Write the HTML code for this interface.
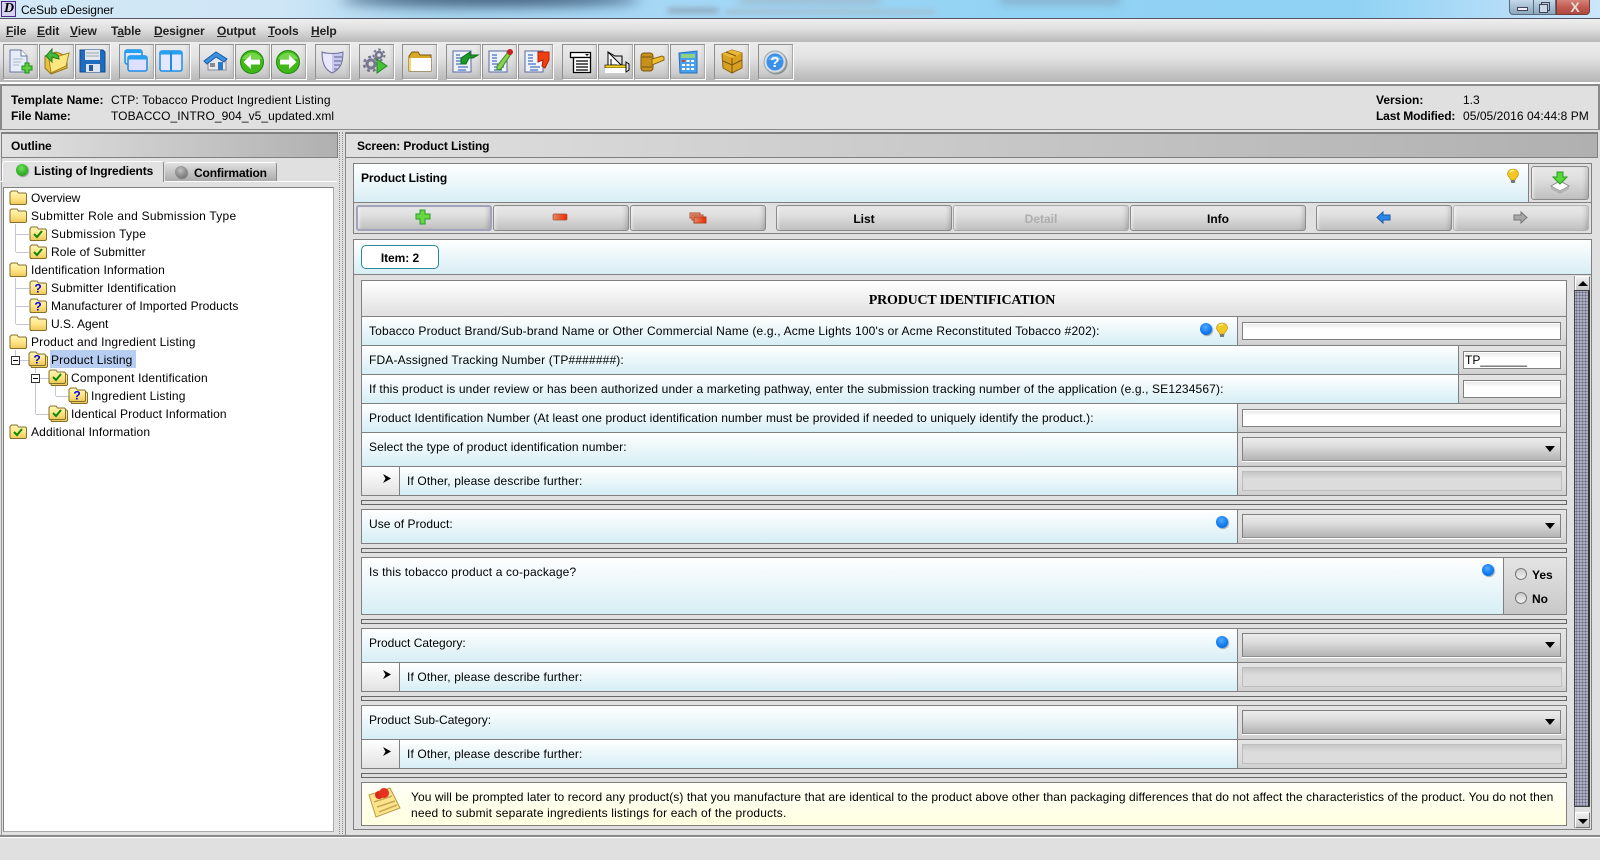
<!DOCTYPE html>
<html><head><meta charset="utf-8"><title>CeSub eDesigner</title>
<style>
html,body{margin:0;padding:0;width:1600px;height:860px;overflow:hidden;background:#e0e0e0}
body{position:relative;font:12px "Liberation Sans",Arial,sans-serif;color:#000}
div,span.a,svg.a{position:absolute;box-sizing:border-box}
.t{position:absolute;white-space:nowrap;line-height:16px;height:16px}
.b{font-weight:bold}
.m{font-weight:bold;color:#222;letter-spacing:-.1px;top:23px}
u{text-decoration:underline}
.tb{width:35px;height:35px;top:44px;background:linear-gradient(#ebebeb,#e2e2e2 40%,#c6c6c6);border:1px solid #8f8f8f;border-right-color:#aaa;border-bottom-color:#aaa;box-shadow:1px 1px 0 #fff,inset -2px -2px 3px rgba(0,0,0,.06)}
.tb svg{position:absolute;left:-1px;top:-1px;width:36px;height:36px}
.btn{top:205px;height:26px;border:1px solid #8a8a8a;border-radius:3px;background:linear-gradient(#e8e8e8,#e0e0e0 35%,#c0c0c0);box-shadow:inset -4px 0 4px -2px rgba(0,0,0,.16),inset 3px 0 3px -2px rgba(255,255,255,.7)}
.lab{background:linear-gradient(#fff,#d6eef5);border:1px solid #808080}
.rc{background:linear-gradient(#e4e4e4,#dcdcdc 70%,#cfcfcf);border:1px solid #808080;border-left:0}
.in{background:linear-gradient(#e6e6e6,#fff 6px);border:1px solid #808080;box-shadow:inset 1px 1px 0 #fff}
.sel{background:linear-gradient(#ececec,#dedede 35%,#b4b4b4);border:1px solid #808080;border-bottom-color:#909090;box-shadow:0 1px 0 #fff;left:1242px;width:319px;height:24px}
.sel:after{content:"";position:absolute;right:5px;top:8px;border:5px solid transparent;border-top:6px solid #000;border-bottom:0}
.dis{left:1242px;width:320px;height:20px;border:1px solid #bdbdbd;background:linear-gradient(#c6c6c6,#dcdcdc 7px)}
.sep{left:361px;width:1206px;height:5px;border:1px solid #666;background:#dedede}
.dot{width:12px;height:12px;border-radius:50%;background:radial-gradient(circle at 45% 35%,#55aaff,#0a78f0 60%,#0a58c0);box-shadow:1px 1px 1px rgba(0,0,0,.35)}
.arr{left:361px;width:39px;height:30px;border:1px solid #808080;background:linear-gradient(#fff,#e2e2e2)}
.tl{background:#c4c4dc}
</style></head><body>
<svg width="0" height="0" style="position:absolute">
<defs><linearGradient id="fy" x1="0" y1="0" x2="0" y2="1"><stop offset="0" stop-color="#fff6b8"/><stop offset=".5" stop-color="#ffe68a"/><stop offset="1" stop-color="#eec858"/></linearGradient></defs>
<symbol id="fo" viewBox="0 0 18 15"><path d="M1 4V2.500L2.500 1H8L9.500 3H16.500L17.500 4V13.500L16.500 14.500H1.500L1 13.500Z" fill="url(#fy)" stroke="#85702a"/></symbol>
<symbol id="ck" viewBox="0 0 18 15"><use href="#fo"/><path d="M5 8L8 11L13 5" fill="none" stroke="#0a8a0a" stroke-width="2"/></symbol>
<symbol id="qu" viewBox="0 0 18 15"><use href="#fo"/><text x="9" y="12.500" font-family="Liberation Sans" font-weight="bold" font-size="12" fill="#0000e0" text-anchor="middle">?</text></symbol>
<symbol id="bulb" viewBox="0 0 14 16"><path d="M7 1C3.500 1 1.500 3.500 1.500 6C1.500 8.500 4.500 10 4.700 12H9.300C9.500 10 12.500 8.500 12.500 6C12.500 3.500 10.500 1 7 1Z" fill="#f4c820" stroke="#b08a10" stroke-width=".6"/><path d="M4 4C5 2.500 7 2.300 8 2.600" stroke="#fff3a0" stroke-width="1.500" fill="none"/><rect x="4.800" y="12" width="4.400" height="3" rx="1" fill="#777"/></symbol>
</svg>

<!-- title bar -->
<div style="left:0;top:0;width:1600px;height:18px;overflow:hidden;background:linear-gradient(90deg,#d2e8f6 0,#cfe6f6 280px,#a9d7f2 420px,#a6d8f6 660px,#93d3f4 1000px,#8fd2f4 1350px,#b9def8 1520px,#cbe6fb 1600px)">
<div style="left:340px;top:-9px;width:300px;height:15px;background:#35506e;border-radius:50%;filter:blur(7px)"></div>
<div style="left:668px;top:8px;width:50px;height:5px;background:#8fa6b6;filter:blur(3px)"></div>
<div style="left:740px;top:-7px;width:140px;height:10px;background:#9fb6c8;filter:blur(5px)"></div>
<div style="left:1000px;top:-6px;width:120px;height:10px;background:#85aec8;filter:blur(5px)"></div>
<div style="left:725px;top:10px;width:210px;height:4px;background:#a4bccb;filter:blur(3px)"></div>
</div>
<div style="left:0;top:18px;width:1600px;height:1px;background:#fff"></div>
<div style="left:1px;top:1px;width:15px;height:16px;background:#d5d5f0;border:1px solid #4a2a90"></div>
<div class="t" style="left:4px;top:1px;font:italic bold 14px/16px 'Liberation Serif',serif">D</div>
<div class="t" style="left:21px;top:2px;font-size:12px;letter-spacing:-.13px">CeSub eDesigner</div>
<div style="left:1509px;top:-2px;width:47px;height:17px;border:1px solid #5a6a7a;border-radius:0 0 0 4px;background:linear-gradient(#c8dcec,#a9c1d6 50%,#8ba6bd)"></div>
<div style="left:1533px;top:0;width:1px;height:14px;background:#5a6a7a"></div>
<div style="left:1517px;top:7px;width:11px;height:4px;border:1px solid #445;background:#eef"></div>
<div style="left:1541px;top:2px;width:9px;height:9px;border:1px solid #445"></div>
<div style="left:1539px;top:4px;width:9px;height:9px;border:1px solid #445;background:#c8d8e6"></div>
<div style="left:1556px;top:-2px;width:34px;height:17px;border:1px solid #7a3a36;border-radius:0 0 4px 0;background:linear-gradient(#d88a80,#c05a50 55%,#b04a40)"></div>
<div class="t b" style="left:1567px;top:-1px;font-size:14px;color:#e6dcd8;width:16px;text-align:center">X</div>

<!-- menu bar -->
<div style="left:0;top:18px;width:1600px;height:24px;border-top:1px solid #556;background:linear-gradient(#efefef,#dedede 45%,#b9b9b9)"></div>
<div class="t m" style="left:6px"><u>F</u>ile</div>
<div class="t m" style="left:37px"><u>E</u>dit</div>
<div class="t m" style="left:70px"><u>V</u>iew</div>
<div class="t m" style="left:111px">T<u>a</u>ble</div>
<div class="t m" style="left:154px"><u>D</u>esigner</div>
<div class="t m" style="left:217px"><u>O</u>utput</div>
<div class="t m" style="left:268px"><u>T</u>ools</div>
<div class="t m" style="left:311px"><u>H</u>elp</div>

<!-- toolbar -->
<div style="left:0;top:42px;width:1600px;height:40px;background:linear-gradient(#ececec,#e2e2e2 40%,#b5b5b5)"></div>
<div style="left:0;top:82px;width:1600px;height:2px;background:#fff"></div>
<div class="tb" style="left:3px"><svg viewBox="0 0 36 36"><path d="M7 6H18L24 12V28H7Z" fill="#e6ecf8" stroke="#66789a"/><path d="M18 6V12H24" fill="#fff" stroke="#66789a"/><path d="M10 15H20M10 18H18M10 21H16" stroke="#a8b8d0"/><path d="M19 22H22V19H26V22H29V26H26V29H22V26H19Z" fill="#5ed040" stroke="#1c8a20"/></svg></div>
<div class="tb" style="left:39px"><svg viewBox="0 0 36 36"><path d="M6 12L17 8L28 12V24L12 30L6 24Z" fill="#e8c040" stroke="#96781c"/><path d="M10 15L30 9L27 22L12 29Z" fill="#fbe680" stroke="#a8881c"/><path d="M7 12L13 5V9C18 9 20 12 20 15L16 14C15 13 14 13 13 13V18Z" fill="#46b83a" stroke="#1e8024"/></svg></div>
<div class="tb" style="left:75px"><svg viewBox="0 0 36 36"><path d="M5 6H28L30 8V28H5Z" fill="#1e6cc0" stroke="#124a8c"/><rect x="10" y="6" width="15" height="10" fill="#e4e8ee"/><path d="M11 9H24M11 12H24" stroke="#9aa"/><rect x="11" y="20" width="14" height="8" fill="#dfe4ea"/><rect x="14" y="21" width="4" height="6" fill="#1e5ca0"/></svg></div>
<div class="tb" style="left:119px"><svg viewBox="0 0 36 36"><rect x="6" y="6" width="17" height="14" rx="2" fill="#dfe8ff" stroke="#1c8ee8" stroke-width="1.500"/><rect x="6" y="6" width="17" height="3" fill="#28a0f0"/><rect x="9" y="12" width="19" height="15" rx="2" fill="#dfe0ff" stroke="#1c8ee8" stroke-width="1.500"/><rect x="9" y="12" width="19" height="3.500" fill="#28a0f0"/></svg></div>
<div class="tb" style="left:155px"><svg viewBox="0 0 36 36"><rect x="5" y="7" width="22" height="20" rx="2" fill="#e4e8ff" stroke="#1c8ee8" stroke-width="1.500"/><rect x="5" y="7" width="22" height="3.500" fill="#28a0f0"/><path d="M16 8V27" stroke="#1c8ee8" stroke-width="2"/></svg></div>
<div class="tb" style="left:199px"><svg viewBox="0 0 36 36"><path d="M9 17L19 11L27 17V26H9Z" fill="#e8e8e8" stroke="#889"/><path d="M5 17L17 8L28 15L25 18L17 13L8 20Z" fill="#3a92e0" stroke="#1a5ca8"/><rect x="19" y="18" width="5" height="8" fill="#2a78c8"/><rect x="11" y="19" width="5" height="4" fill="#889"/></svg></div>
<div class="tb" style="left:235px"><svg viewBox="0 0 36 36"><circle cx="17" cy="18" r="11.500" fill="#42b818" stroke="#1e8a10"/><path d="M7 15A11 11 0 0 1 27 15Z" fill="#8ae060" opacity=".7"/><path d="M25 15.500H16V11L8.500 18L16 25V20.500H25Z" fill="#fff"/></svg></div>
<div class="tb" style="left:271px"><svg viewBox="0 0 36 36"><circle cx="17" cy="18" r="11.500" fill="#42b818" stroke="#1e8a10"/><path d="M7 15A11 11 0 0 1 27 15Z" fill="#8ae060" opacity=".7"/><path d="M9 15.500H18V11L25.500 18L18 25V20.500H9Z" fill="#fff"/></svg></div>
<div class="tb" style="left:315px"><svg viewBox="0 0 36 36"><path d="M7 8C13 10 22 10 28 8C28 18 26 25 17 29C9 25 7 18 7 8Z" fill="#c8c8f0" stroke="#70709a"/><path d="M17 10V28C9 24 8 17 8 10Z" fill="#e8e8fa"/><path d="M19 13H27M19 17H27M19 21H25M19 25H22" stroke="#8080a8" stroke-width="1.500"/></svg></div>
<div class="tb" style="left:359px"><svg viewBox="0 0 36 36"><circle cx="12" cy="20" r="4" fill="none" stroke="#777790" stroke-width="3"/><circle cx="12" cy="20" r="7" fill="none" stroke="#777790" stroke-width="2.500" stroke-dasharray="3 3"/><circle cx="20" cy="11" r="3" fill="none" stroke="#777790" stroke-width="2.500"/><circle cx="20" cy="11" r="5.500" fill="none" stroke="#777790" stroke-width="2" stroke-dasharray="2.500 2.500"/><path d="M18 15L28 22L18 29Z" fill="#48c038" stroke="#1e8a20"/></svg></div>
<div class="tb" style="left:402px"><svg viewBox="0 0 36 36"><path d="M7 27V12L10 8H16L18 11H29V27Z" fill="#d8a828" stroke="#7a5a10"/><path d="M9 14H29V27H9Z" fill="#fff"/><path d="M7 14H9V27H7Z" fill="#f4d860"/></svg></div>
<div class="tb" style="left:446px"><svg viewBox="0 0 36 36"><rect x="7" y="7" width="18" height="21" fill="#eef2fb" stroke="#5a6aa0"/><path d="M10 11H14M10 14H15M10 17H15M10 20H20M12 23H22M12 26H20" stroke="#1c50b0"/><path d="M15 14L24 8V11H32L27 14H23L20 20H15Z" fill="#1c9a28" stroke="#0c6c14"/></svg></div>
<div class="tb" style="left:482px"><svg viewBox="0 0 36 36"><rect x="7" y="7" width="18" height="21" fill="#eef2fb" stroke="#5a6aa0"/><path d="M10 11H15M10 14H15M10 17H15M10 20H18M12 23H22M12 26H20" stroke="#1c50b0"/><path d="M15 22L26 8L29 10L19 25L15 26Z" fill="#8ad050" stroke="#3a8a20"/><circle cx="28" cy="8" r="3" fill="#c82020"/></svg></div>
<div class="tb" style="left:518px"><svg viewBox="0 0 36 36"><rect x="7" y="7" width="18" height="21" fill="#eef2fb" stroke="#5a6aa0"/><path d="M10 11H15M10 14H15M10 17H15M10 20H18M12 23H22M12 26H20" stroke="#1c50b0"/><path d="M20 8H31V16L27 24L24 22L25 16L20 18Z" fill="#f04010" stroke="#b02008"/></svg></div>
<div class="tb" style="left:562px"><svg viewBox="0 0 36 36"><path d="M8.500 8.500H28.500V13.500H8.500Z" fill="#fff" stroke="#000" stroke-width="1.300"/><path d="M11.500 13.500H28.500V28.500H11.500Z" fill="#fff" stroke="#000" stroke-width="1.300"/><path d="M14 17H26M14 20H26M14 23H26M14 26H26" stroke="#000" stroke-width="1.200"/><path d="M23 10H27L25 12Z" fill="#000"/></svg></div>
<div class="tb" style="left:598px"><svg viewBox="0 0 36 36"><path d="M10 8L26 24H10Z" fill="#fff" stroke="#000"/><path d="M10 8L17 12H24V24" fill="none" stroke="#000"/><path d="M13 15V21H19" fill="none" stroke="#000"/><rect x="7" y="21" width="21" height="3" fill="#f0d020" stroke="#000" stroke-width=".6"/><rect x="7" y="24" width="21" height="5" fill="#fff"/><path d="M28 18L31 20V26L28 28Z" fill="#eee" stroke="#000"/></svg></div>
<div class="tb" style="left:634px"><svg viewBox="0 0 36 36"><rect x="7" y="9" width="12" height="18" rx="3" fill="#c8901c" stroke="#7a5410"/><path d="M8 13H18M8 23H18" stroke="#7a5410"/><path d="M18 15L28 12L30 13V16L18 21Z" fill="#eec030" stroke="#8a6414"/></svg></div>
<div class="tb" style="left:670px"><svg viewBox="0 0 36 36"><path d="M9 9L27 7V29H10Z" fill="#48a0ec" stroke="#2870b8"/><rect x="11" y="10" width="14" height="4" fill="#90d080"/><g fill="#fff"><rect x="12" y="16" width="3" height="2" fill="#e04030"/><rect x="16.500" y="16" width="3" height="2"/><rect x="21" y="16" width="3" height="2"/><rect x="12" y="20" width="3" height="2"/><rect x="16.500" y="20" width="3" height="2"/><rect x="21" y="20" width="3" height="2"/><rect x="12" y="24" width="3" height="2"/><rect x="16.500" y="24" width="3" height="2"/><rect x="21" y="24" width="3" height="2"/></g></svg></div>
<div class="tb" style="left:714px"><svg viewBox="0 0 36 36"><path d="M8 10L18 6L28 9V24L18 29L9 24Z" fill="#d8a020" stroke="#8a6414"/><path d="M8 10L18 14L28 9L18 6Z" fill="#eab838"/><path d="M18 14V29M9 17L18 21L28 16M12 8L22 12" stroke="#7a5410" fill="none"/></svg></div>
<div class="tb" style="left:758px"><svg viewBox="0 0 36 36"><circle cx="18" cy="19" r="11.500" fill="#888"/><circle cx="17" cy="18" r="11" fill="#d8dce4" stroke="#9aa"/><circle cx="17" cy="18" r="8.500" fill="#3a90e8"/><path d="M10 16A8 8 0 0 1 24 16Z" fill="#7cc0f8" opacity=".7"/><text x="17" y="23" font-family="Liberation Sans" font-size="15" font-weight="bold" fill="#fff" text-anchor="middle">?</text></svg></div>

<!-- header info -->
<div style="left:0;top:84px;width:1600px;height:46px;background:#e0e0e0;border-top:2px solid #8a8a8a;border-left:2px solid #8a8a8a;border-right:2px solid #8a8a8a;border-bottom:1px solid #8a8a8a"></div>
<div class="t b" style="left:11px;top:92px;letter-spacing:.05px">Template Name:</div>
<div class="t" style="left:111px;top:92px;letter-spacing:.13px">CTP: Tobacco Product Ingredient Listing</div>
<div class="t b" style="left:11px;top:108px;letter-spacing:-.1px">File Name:</div>
<div class="t" style="left:111px;top:108px;letter-spacing:.06px">TOBACCO_INTRO_904_v5_updated.xml</div>
<div class="t b" style="left:1376px;top:92px">Version:</div>
<div class="t" style="left:1463px;top:92px">1.3</div>
<div class="t b" style="left:1376px;top:108px;letter-spacing:-.15px">Last Modified:</div>
<div class="t" style="left:1463px;top:108px;letter-spacing:.05px">05/05/2016 04:44:8 PM</div>

<!-- outline -->
<div style="left:1px;top:132px;width:337px;height:26px;border:1px solid #808080;border-top:2px solid #808080;background:linear-gradient(90deg,#e2e2e2,#b0b0b0)"></div>
<div class="t b" style="left:11px;top:138px;letter-spacing:-.1px">Outline</div>
<div style="left:1px;top:158px;width:337px;height:678px;background:#e0e0e0;border-left:1px solid #999"></div>
<div style="left:2px;top:161px;width:162px;height:21px;background:#e2e2e2;border-top:1px solid #fff;border-left:1px solid #fff;border-right:1px solid #888;border-radius:3px 3px 0 0;z-index:2"></div>
<div style="left:165px;top:162px;width:112px;height:20px;background:linear-gradient(#e0e0e0,#a8a8a8);border-top:1px solid #fff;border-right:1px solid #888;border-radius:3px 3px 0 0"></div>
<div class="dot" style="left:16px;top:164px;z-index:3;background:radial-gradient(circle at 45% 35%,#70e060,#30b020 60%,#188010)"></div>
<div class="t b" style="left:34px;top:163px;z-index:3;font-size:12px;letter-spacing:-.13px">Listing of Ingredients</div>
<div class="dot" style="left:175px;top:166px;background:radial-gradient(circle at 45% 35%,#c0c0c0,#888 60%,#666)"></div>
<div class="t b" style="left:194px;top:165px;letter-spacing:-.15px">Confirmation</div>
<div style="left:0;top:181px;width:337px;height:1px;background:#fff"></div>
<div style="left:3px;top:187px;width:331px;height:645px;background:#fff;border:1px solid #808080;border-bottom-color:#aaa;border-right-color:#aaa"></div>

<!-- tree lines -->
<div class="tl" style="left:15px;top:224px;width:1px;height:28px"></div><div class="tl" style="left:16px;top:234px;width:13px;height:1px"></div><div class="tl" style="left:16px;top:252px;width:13px;height:1px"></div>
<div class="tl" style="left:15px;top:278px;width:1px;height:46px"></div><div class="tl" style="left:16px;top:288px;width:13px;height:1px"></div><div class="tl" style="left:16px;top:306px;width:13px;height:1px"></div><div class="tl" style="left:16px;top:324px;width:13px;height:1px"></div>
<div class="tl" style="left:15px;top:350px;width:1px;height:6px"></div><div class="tl" style="left:20px;top:360px;width:9px;height:1px"></div>
<div class="tl" style="left:35px;top:382px;width:1px;height:32px"></div><div class="tl" style="left:35px;top:368px;width:1px;height:5px"></div><div class="tl" style="left:40px;top:378px;width:9px;height:1px"></div><div class="tl" style="left:36px;top:414px;width:13px;height:1px"></div>
<div class="tl" style="left:55px;top:386px;width:1px;height:10px"></div><div class="tl" style="left:56px;top:396px;width:13px;height:1px"></div>
<div style="left:11px;top:356px;width:9px;height:9px;border:1px solid #333;background:#fff"></div><div style="left:13px;top:360px;width:5px;height:1px;background:#000"></div>
<div style="left:31px;top:374px;width:9px;height:9px;border:1px solid #333;background:#fff"></div><div style="left:33px;top:378px;width:5px;height:1px;background:#000"></div>

<!-- tree icons -->
<svg class="a" style="left:9px;top:190px" width="18" height="15"><use href="#fo"/></svg>
<svg class="a" style="left:9px;top:208px" width="18" height="15"><use href="#fo"/></svg>
<svg class="a" style="left:29px;top:226px" width="18" height="15"><use href="#ck"/></svg>
<svg class="a" style="left:29px;top:244px" width="18" height="15"><use href="#ck"/></svg>
<svg class="a" style="left:9px;top:262px" width="18" height="15"><use href="#fo"/></svg>
<svg class="a" style="left:29px;top:280px" width="18" height="15"><use href="#qu"/></svg>
<svg class="a" style="left:29px;top:298px" width="18" height="15"><use href="#qu"/></svg>
<svg class="a" style="left:29px;top:316px" width="18" height="15"><use href="#fo"/></svg>
<svg class="a" style="left:9px;top:334px" width="18" height="15"><use href="#fo"/></svg>
<svg class="a" style="left:30px;top:353px" width="18" height="15"><use href="#fo"/></svg><svg class="a" style="left:28px;top:351px" width="18" height="15"><use href="#qu"/></svg>
<svg class="a" style="left:50px;top:371px" width="18" height="15"><use href="#fo"/></svg><svg class="a" style="left:48px;top:369px" width="18" height="15"><use href="#ck"/></svg>
<svg class="a" style="left:70px;top:389px" width="18" height="15"><use href="#fo"/></svg><svg class="a" style="left:68px;top:387px" width="18" height="15"><use href="#qu"/></svg>
<svg class="a" style="left:50px;top:407px" width="18" height="15"><use href="#fo"/></svg><svg class="a" style="left:48px;top:405px" width="18" height="15"><use href="#ck"/></svg>
<svg class="a" style="left:9px;top:424px" width="18" height="15"><use href="#ck"/></svg>

<!-- tree text -->
<div style="left:50px;top:350px;width:86px;height:18px;background:#b8cdf2"></div>
<div class="t" style="left:31px;top:190px;letter-spacing:-.1px">Overview</div>
<div class="t" style="left:31px;top:208px;letter-spacing:.24px">Submitter Role and Submission Type</div>
<div class="t" style="left:51px;top:226px;letter-spacing:.27px">Submission Type</div>
<div class="t" style="left:51px;top:244px;letter-spacing:.12px">Role of Submitter</div>
<div class="t" style="left:31px;top:262px;letter-spacing:.12px">Identification Information</div>
<div class="t" style="left:51px;top:280px;letter-spacing:.13px">Submitter Identification</div>
<div class="t" style="left:51px;top:298px;letter-spacing:.06px">Manufacturer of Imported Products</div>
<div class="t" style="left:51px;top:316px">U.S. Agent</div>
<div class="t" style="left:31px;top:334px;letter-spacing:.17px">Product and Ingredient Listing</div>
<div class="t" style="left:51px;top:352px;letter-spacing:.14px">Product Listing</div>
<div class="t" style="left:71px;top:370px;letter-spacing:.17px">Component Identification</div>
<div class="t" style="left:91px;top:388px;letter-spacing:.18px">Ingredient Listing</div>
<div class="t" style="left:71px;top:406px;letter-spacing:.1px">Identical Product Information</div>
<div class="t" style="left:31px;top:424px;letter-spacing:.14px">Additional Information</div>

<!-- divider -->
<div style="left:339px;top:132px;width:1px;height:704px;border-left:1px dotted #888"></div>
<div style="left:342px;top:132px;width:1px;height:704px;border-left:1px dotted #888"></div>

<!-- right side -->
<div style="left:345px;top:132px;width:1253px;height:26px;border:1px solid #808080;border-top:2px solid #808080;background:linear-gradient(90deg,#e0e0e0,#b0b0b0)"></div>
<div class="t b" style="left:357px;top:138px;letter-spacing:-.13px">Screen: Product Listing</div>
<div style="left:345px;top:158px;width:1px;height:678px;background:#8a8a8a"></div>
<div style="left:353px;top:163px;width:1239px;height:71px;border:1px solid #808080;background:#e0e0e0"></div>
<div style="left:354px;top:164px;width:1175px;height:38px;background:linear-gradient(#fff,#d8eef5)"></div>
<div style="left:354px;top:202px;width:1237px;height:1px;background:#808080"></div>
<div style="left:1528px;top:164px;width:1px;height:38px;background:#808080"></div>
<div class="t b" style="left:361px;top:170px;letter-spacing:-.13px">Product Listing</div>
<svg class="a" style="left:1506px;top:168px" width="14" height="16"><use href="#bulb"/></svg>
<div class="btn" style="left:1531px;top:166px;width:58px;height:34px"></div>
<svg class="a" style="left:1550px;top:171px" width="20" height="23" viewBox="0 0 20 23"><path d="M1 15L10 10L19 15L10 20Z" fill="#fff" stroke="#888"/><path d="M1 15V18L10 23L19 18V15L10 20Z" fill="#b4b4b4"/><path d="M7 1H13V6H17L10 13L3 6H7Z" fill="#58d838" stroke="#2a9a20"/></svg>

<div class="btn" style="left:356px;width:136px;border:2px solid #a2a2ba"></div>
<div class="btn" style="left:493px;width:136px"></div>
<div class="btn" style="left:630px;width:136px"></div>
<div class="btn" style="left:776px;width:176px"></div>
<div class="btn" style="left:953px;width:176px;border-color:#aaa"></div>
<div class="btn" style="left:1130px;width:176px"></div>
<div class="btn" style="left:1316px;width:136px"></div>
<div class="btn" style="left:1453px;width:136px;border-color:#b4b4b4"></div>
<svg class="a" style="left:415px;top:209px" width="16" height="16" viewBox="0 0 16 16"><path d="M5 1H10V5H15V10H10V15H5V10H1V5H5Z" fill="#66d840" stroke="#2c9a2c"/></svg>
<svg class="a" style="left:552px;top:213px" width="16" height="9" viewBox="0 0 16 9"><defs><linearGradient id="rg"><stop offset="0" stop-color="#e08a68"/><stop offset="1" stop-color="#f02800"/></linearGradient></defs><rect x="1" y="1" width="14" height="6" rx="1" fill="url(#rg)" stroke="#a85030" stroke-width=".7"/></svg>
<svg class="a" style="left:689px;top:212px" width="18" height="12" viewBox="0 0 18 12"><rect x="1" y="1" width="10" height="5" fill="#f0a888" stroke="#b05030"/><rect x="3" y="3" width="11" height="5" fill="#ea9878" stroke="#b05030"/><rect x="5" y="5" width="12" height="6" fill="url(#rg)" stroke="#b04020"/></svg>
<div class="t b" style="left:776px;top:211px;width:176px;text-align:center">List</div>
<div class="t b" style="left:953px;top:211px;width:176px;text-align:center;color:#aeaeae">Detail</div>
<div class="t b" style="left:1130px;top:211px;width:176px;text-align:center">Info</div>
<svg class="a" style="left:1376px;top:211px" width="15" height="13" viewBox="0 0 15 13"><path d="M1 6.500L7 1V4H14V9H7V12Z" fill="#2a88e8" stroke="#1c5ca8"/></svg>
<svg class="a" style="left:1513px;top:211px" width="15" height="13" viewBox="0 0 15 13"><path d="M14 6.500L8 1V4H1V9H8V12Z" fill="#a8a8a8" stroke="#777"/></svg>

<!-- item panel -->
<div style="left:353px;top:239px;width:1239px;height:591px;border:1px solid #808080;background:#e0e0e0"></div>
<div style="left:354px;top:240px;width:1237px;height:35px;background:linear-gradient(#fff,#d8eef5);border-bottom:1px solid #808080"></div>
<div style="left:361px;top:245px;width:78px;height:24px;background:#fff;border:1px solid #2a8a9a;border-radius:5px"></div>
<div class="t b" style="left:361px;top:250px;width:78px;text-align:center;letter-spacing:-.05px">Item: 2</div>

<!-- form -->
<div style="left:361px;top:280px;width:1206px;height:37px;border:1px solid #808080;background:linear-gradient(#fff,#e0e0e0)"></div>
<div class="t" style="left:361px;top:293px;width:1202px;text-align:center;font:bold 14px/16px 'Liberation Serif',serif;letter-spacing:-.22px">PRODUCT IDENTIFICATION</div>

<div class="lab" style="left:361px;top:316px;width:877px;height:30px"></div><div class="rc" style="left:1238px;top:316px;width:329px;height:30px"></div>
<div class="in" style="left:1242px;top:322px;width:319px;height:18px"></div>
<div class="t" style="left:369px;top:323px;letter-spacing:.17px">Tobacco Product Brand/Sub-brand Name or Other Commercial Name (e.g., Acme Lights 100's or Acme Reconstituted Tobacco #202):</div>
<div class="dot" style="left:1200px;top:323px"></div>
<svg class="a" style="left:1215px;top:322px" width="14" height="16"><use href="#bulb"/></svg>

<div class="lab" style="left:361px;top:345px;width:1098px;height:30px"></div><div class="rc" style="left:1459px;top:345px;width:108px;height:30px"></div>
<div class="in" style="left:1463px;top:351px;width:98px;height:18px"></div>
<div class="t" style="left:369px;top:352px;letter-spacing:.15px">FDA-Assigned Tracking Number (TP#######):</div>
<div class="t" style="left:1465px;top:352px">TP_______</div>

<div class="lab" style="left:361px;top:374px;width:1098px;height:30px"></div><div class="rc" style="left:1459px;top:374px;width:108px;height:30px"></div>
<div class="in" style="left:1463px;top:380px;width:98px;height:18px"></div>
<div class="t" style="left:369px;top:381px;letter-spacing:.13px">If this product is under review or has been authorized under a marketing pathway, enter the submission tracking number of the application (e.g., SE1234567):</div>

<div class="lab" style="left:361px;top:403px;width:877px;height:30px"></div><div class="rc" style="left:1238px;top:403px;width:329px;height:30px"></div>
<div class="in" style="left:1242px;top:409px;width:319px;height:18px"></div>
<div class="t" style="left:369px;top:410px;letter-spacing:.1px">Product Identification Number (At least one product identification number must be provided if needed to uniquely identify the product.):</div>

<div class="lab" style="left:361px;top:432px;width:877px;height:35px"></div><div class="rc" style="left:1238px;top:432px;width:329px;height:35px"></div>
<div class="sel" style="top:437px"></div>
<div class="t" style="left:369px;top:439px;letter-spacing:.085px">Select the type of product identification number:</div>

<div class="lab" style="left:399px;top:466px;width:839px;height:30px"></div><div class="rc" style="left:1238px;top:466px;width:329px;height:30px"></div>
<div class="arr" style="top:466px"></div>
<div class="dis" style="top:471px"></div>
<svg class="a" style="left:382px;top:474px" width="10" height="9" viewBox="0 0 10 9"><path d="M1 0L9 4.500L1 9L3.500 4.500Z" fill="#000"/></svg>
<div class="t" style="left:407px;top:473px;letter-spacing:.12px">If Other, please describe further:</div>

<div class="sep" style="top:500px"></div>

<div class="lab" style="left:361px;top:509px;width:877px;height:35px"></div><div class="rc" style="left:1238px;top:509px;width:329px;height:35px"></div>
<div class="sel" style="top:514px"></div>
<div class="t" style="left:369px;top:516px;letter-spacing:.07px">Use of Product:</div>
<div class="dot" style="left:1216px;top:516px"></div>

<div class="sep" style="top:548px"></div>

<div class="lab" style="left:361px;top:557px;width:1143px;height:58px"></div><div class="rc" style="left:1503px;top:557px;width:64px;height:58px;border-left:1px solid #808080;background:linear-gradient(#e4e4e4,#c8c8c8)"></div>
<div class="t" style="left:369px;top:564px;letter-spacing:.14px">Is this tobacco product a co-package?</div>
<div class="dot" style="left:1482px;top:564px"></div>
<div style="left:1515px;top:568px;width:12px;height:12px;border-radius:50%;border:1px solid #777;background:linear-gradient(#ccc,#f0f0f0)"></div>
<div style="left:1515px;top:592px;width:12px;height:12px;border-radius:50%;border:1px solid #777;background:linear-gradient(#ccc,#f0f0f0)"></div>
<div class="t b" style="left:1532px;top:567px">Yes</div>
<div class="t b" style="left:1532px;top:591px">No</div>

<div class="sep" style="top:619px"></div>

<div class="lab" style="left:361px;top:628px;width:877px;height:35px"></div><div class="rc" style="left:1238px;top:628px;width:329px;height:35px"></div>
<div class="sel" style="top:633px"></div>
<div class="t" style="left:369px;top:635px">Product Category:</div>
<div class="dot" style="left:1216px;top:636px"></div>

<div class="lab" style="left:399px;top:662px;width:839px;height:30px"></div><div class="rc" style="left:1238px;top:662px;width:329px;height:30px"></div>
<div class="arr" style="top:662px"></div>
<div class="dis" style="top:667px"></div>
<svg class="a" style="left:382px;top:670px" width="10" height="9" viewBox="0 0 10 9"><path d="M1 0L9 4.500L1 9L3.500 4.500Z" fill="#000"/></svg>
<div class="t" style="left:407px;top:669px;letter-spacing:.12px">If Other, please describe further:</div>

<div class="sep" style="top:696px"></div>

<div class="lab" style="left:361px;top:705px;width:877px;height:35px"></div><div class="rc" style="left:1238px;top:705px;width:329px;height:35px"></div>
<div class="sel" style="top:710px"></div>
<div class="t" style="left:369px;top:712px">Product Sub-Category:</div>

<div class="lab" style="left:399px;top:739px;width:839px;height:30px"></div><div class="rc" style="left:1238px;top:739px;width:329px;height:30px"></div>
<div class="arr" style="top:739px"></div>
<div class="dis" style="top:744px"></div>
<svg class="a" style="left:382px;top:747px" width="10" height="9" viewBox="0 0 10 9"><path d="M1 0L9 4.500L1 9L3.500 4.500Z" fill="#000"/></svg>
<div class="t" style="left:407px;top:746px;letter-spacing:.12px">If Other, please describe further:</div>

<div class="sep" style="top:773px"></div>

<div style="left:361px;top:782px;width:1206px;height:44px;border:1px solid #808080;background:linear-gradient(#fffff8,#ffffe0)"></div>
<svg class="a" style="left:367px;top:786px" width="35" height="33" viewBox="0 0 35 33"><path d="M2 9L23 2L33 22L9 31Z" fill="#fbe48c" stroke="#b89a3c"/><path d="M7 16L25 10M10 21L28 15M12 26L30 19" stroke="#c8a850" stroke-width="1.500"/><circle cx="12" cy="9" r="4" fill="#d82818"/><circle cx="17" cy="7" r="5" fill="#e83020"/></svg>
<div class="t" style="left:411px;top:789px;letter-spacing:.08px">You will be prompted later to record any product(s) that you manufacture that are identical to the product above other than packaging differences that do not affect the characteristics of the product. You do not then</div>
<div class="t" style="left:411px;top:805px;letter-spacing:.17px">need to submit separate ingredients listings for each of the products.</div>

<!-- scrollbar -->
<div style="left:1574px;top:276px;width:16px;height:552px;background:#e0e0e0;border-left:1px solid #999"></div>
<div style="left:1575px;top:276px;width:15px;height:15px;border:1px solid #aaa;border-color:#fff #777 #777 #fff;background:linear-gradient(#f0f0f0,#c8c8c8)"></div>
<div style="left:1578px;top:281px;border:5px solid transparent;border-bottom:5px solid #000;border-top:0;width:0;height:0"></div>
<div style="left:1574px;top:290px;width:16px;height:517px;border:1px solid #444;border-right:2px solid #333;background-color:#aeaec2;background-image:radial-gradient(#66667e 0.8px,transparent 1px);background-size:3px 3px"></div>
<div style="left:1575px;top:812px;width:15px;height:16px;border:1px solid #aaa;border-color:#fff #777 #777 #fff;background:linear-gradient(#f0f0f0,#c8c8c8)"></div>
<div style="left:1578px;top:819px;border:5px solid transparent;border-top:5px solid #000;border-bottom:0;width:0;height:0"></div>

<!-- status -->
<div style="left:0;top:835px;width:1600px;height:2px;background:#8a8a8a"></div>
<div style="left:0;top:837px;width:1600px;height:23px;background:#e0e0e0;border-top:1px solid #fff"></div>
</body></html>
